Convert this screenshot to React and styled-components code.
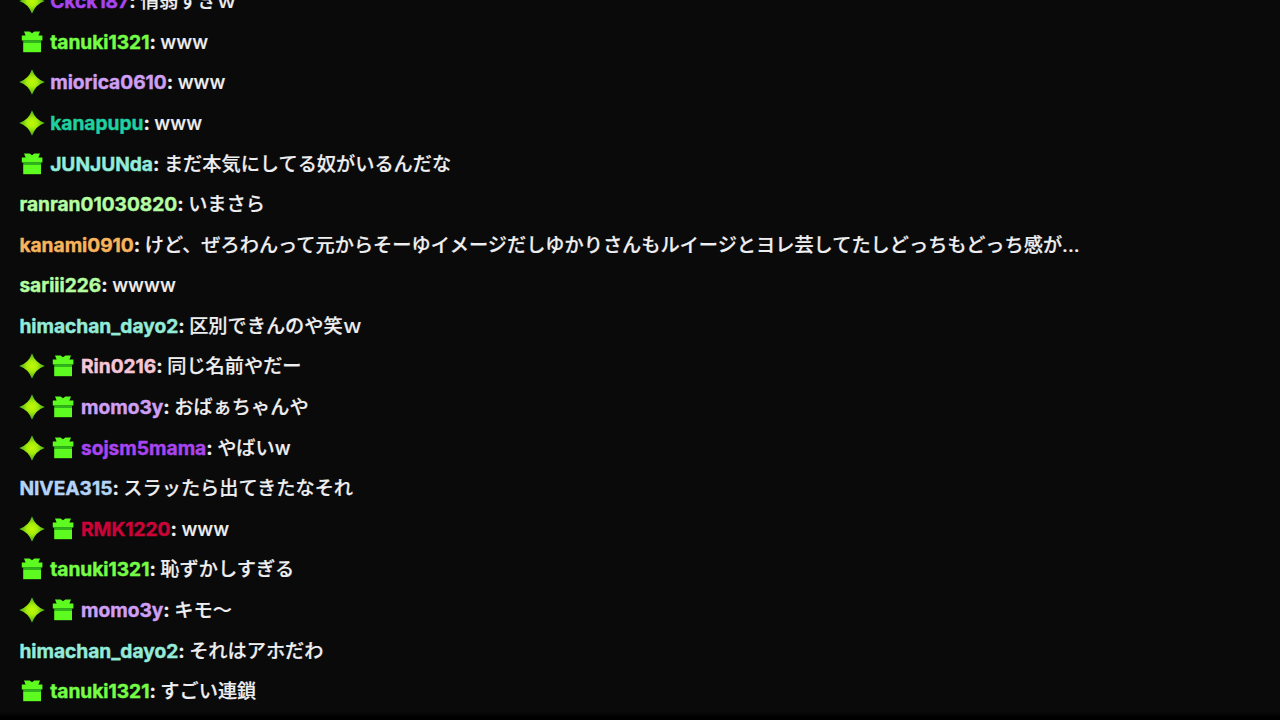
import React from 'react'
import styled, { createGlobalStyle } from 'styled-components'

const MESSAGES = [
  { user: 'Ckck187', color: '#a844f0', badges: ['star'], text: '情弱すぎｗ' },
  { user: 'tanuki1321', color: '#75fd46', badges: ['gift'], text: 'www' },
  { user: 'miorica0610', color: '#cf9ff5', badges: ['star'], text: 'www' },
  { user: 'kanapupu', color: '#1fd0a0', badges: ['star'], text: 'www' },
  { user: 'JUNJUNda', color: '#93ebd9', badges: ['gift'], text: 'まだ本気にしてる奴がいるんだな' },
  { user: 'ranran01030820', color: '#b4fda0', text: 'いまさら' },
  {
    user: 'kanami0910',
    color: '#f7b45c',
    text: 'けど、ぜろわんって元からそーゆイメージだしゆかりさんもルイージとヨレ芸してたしどっちもどっち感が...',
  },
  { user: 'sariii226', color: '#b4fda0', text: 'wwww' },
  { user: 'himachan_dayo2', color: '#93ebd9', text: '区別できんのや笑ｗ' },
  { user: 'Rin0216', color: '#f7c6d6', badges: ['star', 'gift'], text: '同じ名前やだー' },
  { user: 'momo3y', color: '#cf9ff5', badges: ['star', 'gift'], text: 'おばぁちゃんや' },
  { user: 'sojsm5mama', color: '#a844f0', badges: ['star', 'gift'], text: 'やばいw' },
  { user: 'NIVEA315', color: '#b4d4f7', text: 'スラッたら出てきたなそれ' },
  { user: 'RMK1220', color: '#cb0338', badges: ['star', 'gift'], text: 'www' },
  { user: 'tanuki1321', color: '#75fd46', badges: ['gift'], text: '恥ずかしすぎる' },
  { user: 'momo3y', color: '#cf9ff5', badges: ['star', 'gift'], text: 'キモ〜' },
  { user: 'himachan_dayo2', color: '#93ebd9', text: 'それはアホだわ' },
  { user: 'tanuki1321', color: '#75fd46', badges: ['gift'], text: 'すごい連鎖' },
]

const StarBadge = () => (
  <Icon viewBox="0 0 26 26">
    <defs>
      <radialGradient id="star-fill" cx="50%" cy="50%" r="50%">
        <stop offset="0" stopColor="#c0fa05" />
        <stop offset="0.4" stopColor="#a8ed0a" />
        <stop offset="1" stopColor="#3fa81c" />
      </radialGradient>
    </defs>
    <path
      d="M13 0.2Q16.2 9.8 25.8 13Q16.2 16.2 13 25.8Q9.8 16.2 0.2 13Q9.8 9.8 13 0.2Z"
      fill="url(#star-fill)"
    />
  </Icon>
)

const GiftBadge = () => (
  <Icon viewBox="0 0 26 26">
    <path
      d="M5 2.4H10.6L13 4.2L15.4 2.4H21L19.4 6.6H23.4V11.4H2.8V6.6H6.6Z"
      fill="#5dfb1f"
    />
    <path d="M4.2 11.2H22V14.2H4.2Z" fill="#2fb51b" />
    <path d="M4.2 14H22V23.2H4.2Z" fill="#5dfb1f" />
  </Icon>
)

const BADGES = { star: StarBadge, gift: GiftBadge }

const ChatMessage = ({ user, color, badges = [], text }) => (
  <Row>
    {badges.map(name => {
      const Badge = BADGES[name]
      return <Badge key={name} />
    })}
    <Line>
      <Username $color={color}>{user}</Username>
      <Colon>: </Colon>
      {text}
    </Line>
  </Row>
)

const App = () => (
  <React.Fragment>
    <GlobalStyle />
    <Main>
      <Messages>
        {MESSAGES.map((message, i) => (
          <ChatMessage key={i} {...message} />
        ))}
      </Messages>
      <BottomEdge />
    </Main>
  </React.Fragment>
)

const GlobalStyle = createGlobalStyle`
  body {
    margin: 0;
    background: #0a0a0a;
    overflow: hidden;
  }
`

const Main = styled.main`
  display: flex;
  flex-direction: column;
  justify-content: flex-end;
  width: 1280px;
  height: 720px;
  overflow: hidden;
  background: #0a0a0a;
`

const Messages = styled.div`
  flex-shrink: 0;
  padding: 0 19.4px 0.6px;
`

const Row = styled.div`
  display: flex;
  align-items: center;
  height: 40.58px;
`

const Icon = styled.svg`
  flex-shrink: 0;
  width: 26px;
  height: 26px;
  margin-right: 4.8px;
`

const Line = styled.span`
  color: #efeff1;
  font-family: Inter, 'Noto Sans CJK JP', sans-serif;
  font-size: 19.2px;
  font-weight: 500;
  font-feature-settings: 'calt' 0;
  line-height: 28px;
  white-space: pre;
  -webkit-text-stroke: 0.2px;
`

const Username = styled.span`
  color: ${({ $color }) => $color};
  font-weight: 700;
  letter-spacing: -0.03px;
  -webkit-text-stroke: 0.4px;
`

const Colon = styled.span`
  font-weight: 700;
`

const BottomEdge = styled.div`
  flex-shrink: 0;
  height: 8px;
  background: linear-gradient(#0a0a0a, #000 60%);
`

export default App
